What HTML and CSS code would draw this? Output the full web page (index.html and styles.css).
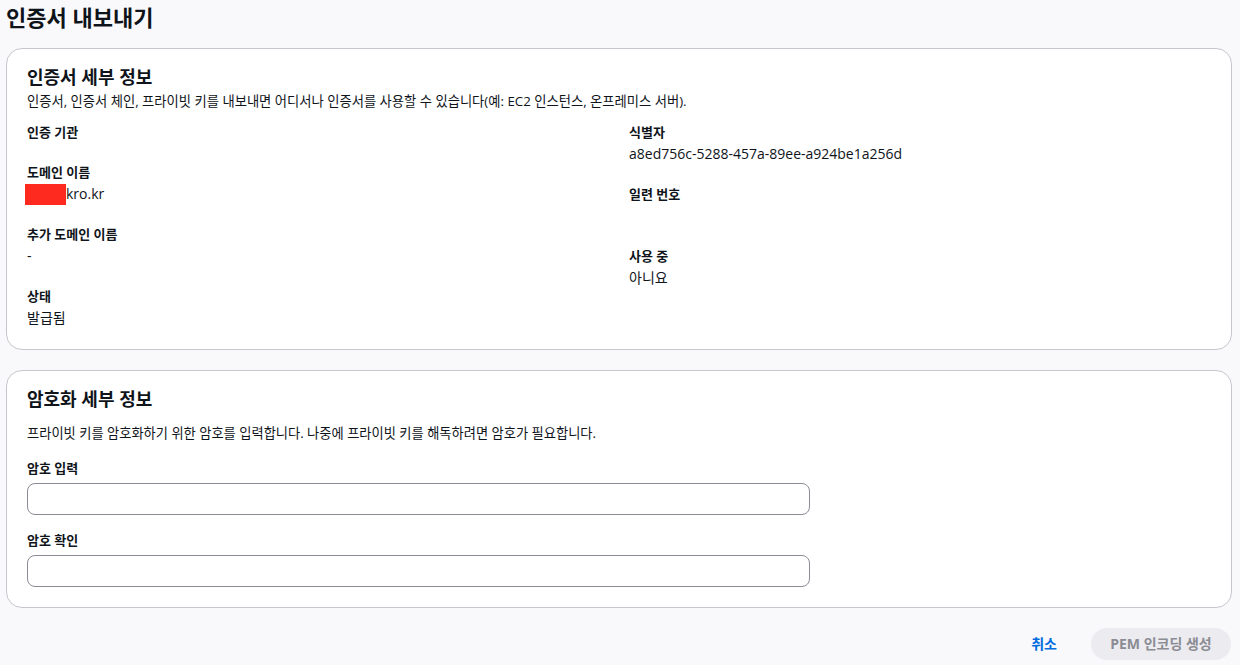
FILE: index.html
```html
<!DOCTYPE html>
<html lang="ko">
<head>
<meta charset="utf-8">
<title>인증서 내보내기</title>
<link rel="stylesheet" href="styles.css">
</head>
<body>
<div class="page">
  <h1 class="page-title">인증서 내보내기</h1>

  <section class="card">
    <div class="card-header">
      <h2 class="card-title">인증서 세부 정보</h2>
      <p class="card-desc">인증서, 인증서 체인, 프라이빗 키를 내보내면 어디서나 인증서를 사용할 수 있습니다(예: EC2 인스턴스, 온프레미스 서버).</p>
    </div>
    <div class="kv-grid">
      <div class="kv-col">
        <div class="kv"><div class="kv-label">인증 기관</div></div>
        <div class="kv"><div class="kv-label">도메인 이름</div><div class="kv-value"><span class="redact"></span>kro.kr</div></div>
        <div class="kv"><div class="kv-label">추가 도메인 이름</div><div class="kv-value">-</div></div>
        <div class="kv"><div class="kv-label">상태</div><div class="kv-value">발급됨</div></div>
      </div>
      <div class="kv-col">
        <div class="kv"><div class="kv-label">식별자</div><div class="kv-value">a8ed756c-5288-457a-89ee-a924be1a256d</div></div>
        <div class="kv"><div class="kv-label">일련 번호</div><div class="kv-value kv-empty"></div></div>
        <div class="kv"><div class="kv-label">사용 중</div><div class="kv-value">아니요</div></div>
      </div>
    </div>
  </section>

  <section class="card card-form">
    <h2 class="card-title">암호화 세부 정보</h2>
    <p class="form-desc">프라이빗 키를 암호화하기 위한 암호를 입력합니다. 나중에 프라이빗 키를 해독하려면 암호가 필요합니다.</p>
    <div class="field">
      <label class="field-label" for="p1">암호 입력</label>
      <input class="field-input" id="p1" type="password">
    </div>
    <div class="field">
      <label class="field-label" for="p2">암호 확인</label>
      <input class="field-input" id="p2" type="password">
    </div>
  </section>

  <div class="actions">
    <button class="btn-link" type="button">취소</button>
    <button class="btn-primary" type="button" disabled>PEM 인코딩 생성</button>
  </div>
</div>
</body>
</html>
```

FILE: styles.css
```css
* { box-sizing: border-box; }
html, body { margin: 0; padding: 0; }
body {
  background: #f9f9fb;
  font-family: "Open Sans", "Noto Sans CJK KR", sans-serif;
  color: #0f141a;
  font-size: 14px;
  line-height: 22px;
}
.page {
  padding: 0 8px 0 6px;
  display: flex;
  flex-direction: column;
}
.page-title {
  margin: 0;
  font-size: 22px;
  line-height: 34px;
  font-weight: 700;
  padding-top: 0;
  height: 48px;
}
.card {
  background: #fff;
  border: 1px solid #c6c6cd;
  border-radius: 16px;
  padding: 16px 20px 20px;
}
.card-header { margin-bottom: 10px; }
.card-title {
  margin: 0;
  font-size: 18px;
  line-height: 24px;
  font-weight: 700;
}
.card-desc {
  margin: 2px 0 0;
  font-size: 13.3px;
  line-height: 20px;
}
.kv-grid {
  display: grid;
  grid-template-columns: 1fr 1fr;
  column-gap: 20px;
}
.kv-col {
  display: flex;
  flex-direction: column;
  gap: 18px;
}
.kv-label {
  font-weight: 700;
  font-size: 13px;
  line-height: 22px;
}
.kv-value {
  font-size: 14px;
  line-height: 22px;
  display: flex;
  align-items: center;
}
.kv-empty { height: 22px; }
.redact {
  display: inline-block;
  width: 41px;
  height: 21px;
  background: #ff2a1f;
  margin-left: -2px;
}
.card-form {
  margin-top: 20px;
  padding-top: 16px;
  padding-bottom: 20px;
}
.form-desc {
  margin: 11px 0 13px;
  font-size: 13.25px;
  line-height: 22px;
}
.field { display: flex; flex-direction: column; }
.field + .field { margin-top: 14px; }
.field-label {
  font-weight: 700;
  font-size: 13px;
  line-height: 22px;
  margin-bottom: 4px;
}
.field-input {
  width: 783px;
  height: 32px;
  border: 1px solid #8c8c94;
  border-radius: 8px;
  background: #fff;
  font: inherit;
  padding: 0 12px;
}
.actions {
  display: flex;
  justify-content: flex-end;
  align-items: center;
  gap: 20px;
  margin-top: 20px;
  padding-right: 1px;
}
.btn-link {
  background: none;
  border: none;
  color: #006ce0;
  font: inherit;
  font-weight: 700;
  font-size: 14px;
  padding: 4px 14px;
  cursor: pointer;
}
.btn-primary {
  background: #ebebf0;
  color: #8c8c94;
  border: none;
  border-radius: 20px;
  font: inherit;
  font-weight: 700;
  font-size: 14px;
  height: 32px;
  width: 140px;
  padding: 0;
}
```
